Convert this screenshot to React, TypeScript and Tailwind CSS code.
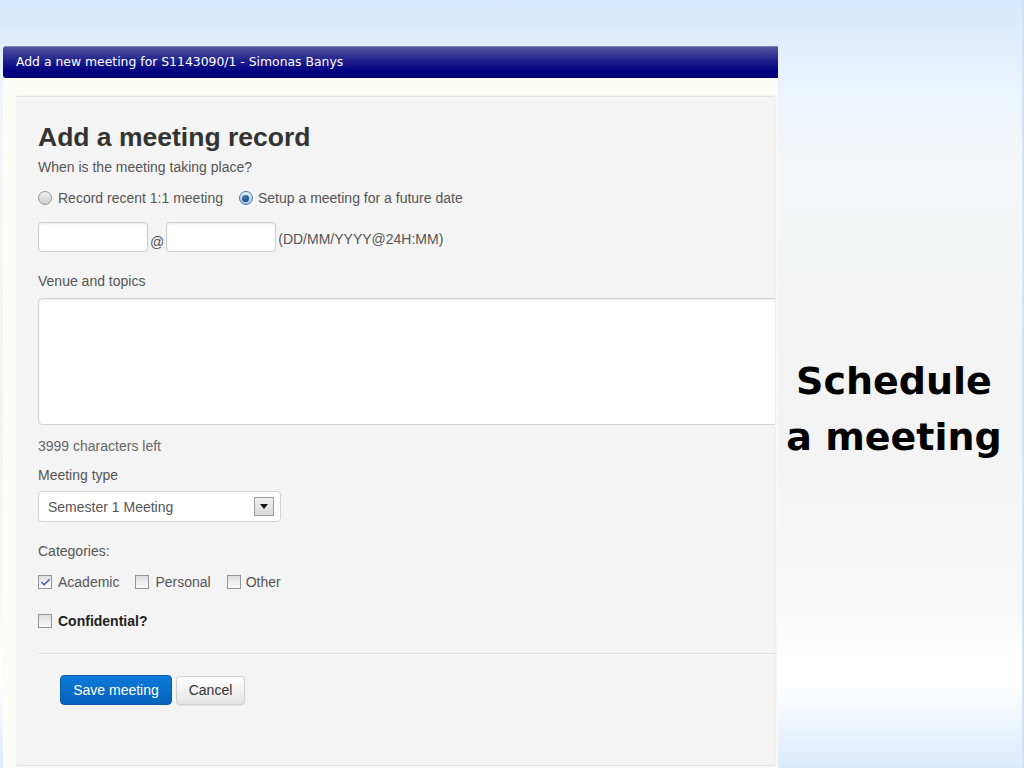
import { Check } from 'lucide-react'

function Radio({ checked }: { checked?: boolean }) {
  return (
    <span
      className={
        checked
          ? 'w-[14px] h-[14px] rounded-full border border-[#4a77a6] bg-[linear-gradient(to_bottom,#e4eef8,#a9c4df)] flex items-center justify-center shrink-0'
          : 'w-[14px] h-[14px] rounded-full border border-[#979797] bg-[linear-gradient(to_bottom,#f2f2f2,#cdcdcd)] shrink-0'
      }
    >
      {checked && <span className="w-[7px] h-[7px] rounded-full bg-[radial-gradient(circle_at_40%_35%,#3d78b8,#123f74)]" />}
    </span>
  )
}

function Checkbox({ checked }: { checked?: boolean }) {
  return (
    <span className="w-[14px] h-[14px] border border-[#959595] bg-[linear-gradient(to_bottom,#dedede,#fafafa)] flex items-center justify-center shrink-0">
      {checked && <Check className="w-[11px] h-[11px] text-[#2b5fa8]" strokeWidth={3} />}
    </span>
  )
}

export default function App() {
  return (
    <div className="w-[1024px] h-[768px] overflow-hidden flex bg-[linear-gradient(to_bottom,#d6e8fb_0%,#e3effc_7%,#eef5fd_13%,#f5f6f7_22%,#f3f3f3_55%,#f9f9f9_80%,#ffffff_86%,#ffffff_89%,#dbeafb_100%)] border-r-[2px] border-[#cfe2f7]">
      {/* Screenshot window */}
      <div className="w-[775px] ml-[3px] mt-[46px] flex flex-col shrink-0 font-['Liberation_Sans',Arial,sans-serif]">
        <div className="h-[32px] rounded-tl-[3px] rounded-bl-[3px] border-t border-[#7d80bb] bg-[linear-gradient(to_bottom,#52559f,#1e1f8d_45%,#000080_80%,#000078)] flex items-center pl-[13px]">
          <span className="text-white text-[12.4px] font-['DejaVu_Sans',sans-serif]">
            Add a new meeting for S1143090/1 - Simonas Banys
          </span>
        </div>

        <div className="flex-1 bg-[#fdfdf8] pl-[13px] pr-[3px] pt-[18px] pb-[2px] flex">
          <div className="flex-1 bg-[#f4f4f4] border-t border-b border-[#e4e4e4] overflow-hidden shadow-[1px_0_2px_rgba(0,0,0,0.08)]">
            <div className="flex flex-col pl-[22px] pt-[25px] text-[14px] leading-[20px] text-[#555]">
              <h1 className="text-[26.5px] leading-[30px] font-bold text-[#333]">Add a meeting record</h1>
              <p className="mt-[5px]">When is the meeting taking place?</p>

              <div className="mt-[11px] h-[20px] flex items-center">
                <Radio />
                <span className="ml-[6px]">Record recent 1:1 meeting</span>
                <span className="ml-[16px]"><Radio checked /></span>
                <span className="ml-[5px]">Setup a meeting for a future date</span>
              </div>

              <div className="mt-[14px] flex items-end">
                <div className="w-[110px] h-[30px] bg-white border border-[#cfcfcf] rounded-[4px] shadow-[inset_0_1px_2px_rgba(0,0,0,0.08)]" />
                <span className="mx-[2px] leading-[20px]">@</span>
                <div className="w-[110px] h-[30px] bg-white border border-[#cfcfcf] rounded-[4px] shadow-[inset_0_1px_2px_rgba(0,0,0,0.08)]" />
                <span className="ml-[2px] pb-[3px]">(DD/MM/YYYY@24H:MM)</span>
              </div>

              <p className="mt-[19px]">Venue and topics</p>
              <div className="mt-[7px] w-[800px] h-[127px] bg-white border border-[#d2d2d2] rounded-[4px] shadow-[inset_0_1px_2px_rgba(0,0,0,0.08)]" />

              <p className="mt-[11px] text-[#666]">3999 characters left</p>
              <p className="mt-[9px]">Meeting type</p>

              <div className="mt-[6px] w-[243px] h-[31px] bg-white border border-[#d2d2d2] rounded-[4px] flex items-center pl-[9px] pr-[6px] justify-between">
                <span className="text-[#555]">Semester 1 Meeting</span>
                <span className="w-[20px] h-[19px] border border-[#9c9c9c] bg-[linear-gradient(to_bottom,#f0f0f0,#d8d8d8)] flex items-center justify-center">
                  <svg width="8" height="5" viewBox="0 0 8 5">
                    <path d="M0 0h8L4 5z" fill="#111" />
                  </svg>
                </span>
              </div>

              <p className="mt-[19px]">Categories:</p>
              <div className="mt-[11px] h-[20px] flex items-center">
                <Checkbox checked />
                <span className="ml-[6px]">Academic</span>
                <span className="ml-[16px]"><Checkbox /></span>
                <span className="ml-[6px]">Personal</span>
                <span className="ml-[16px]"><Checkbox /></span>
                <span className="ml-[5px]">Other</span>
              </div>

              <div className="mt-[19px] h-[20px] flex items-center">
                <Checkbox />
                <span className="ml-[6px] font-bold text-[#222]">Confidential?</span>
              </div>

              <div className="mt-[22px] h-[2px] border-t border-[#e2e2e2] bg-[#fafafa]" />

              <div className="mt-[20px] ml-[22px] flex items-center gap-[4px]">
                <button className="h-[30px] w-[112px] rounded-[4px] border border-[#0a5cab] bg-[linear-gradient(to_bottom,#0e7ad9,#0562bb)] text-white text-[14px]">
                  Save meeting
                </button>
                <button className="h-[29px] w-[69px] rounded-[4px] border border-[#d0d0d0] bg-[linear-gradient(to_bottom,#ffffff,#e4e4e4)] text-[#333] text-[14px] shadow-[0_1px_1px_rgba(0,0,0,0.08)]">
                  Cancel
                </button>
              </div>
            </div>
          </div>
        </div>
      </div>

      {/* Slide caption */}
      <div className="flex-1 flex items-center justify-center pr-[12px] pt-[50px]">
        <p className="text-center text-[38px] leading-[56px] font-bold text-black font-['DejaVu_Sans',sans-serif]">
          Schedule
          <br />a meeting
        </p>
      </div>
    </div>
  )
}
